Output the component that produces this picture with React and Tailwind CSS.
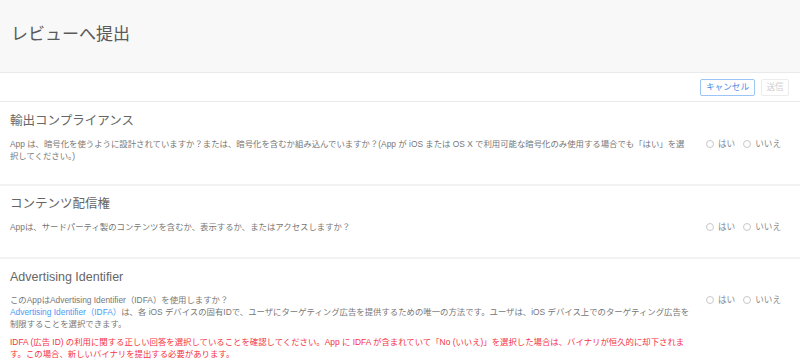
import React from "react";

const font = { fontFamily: '"Liberation Sans", "Noto Sans CJK JP", sans-serif' };

function Radios() {
  return (
    <div className="flex items-center gap-[8px] text-[8.6px] leading-[12px] text-[#888] shrink-0 w-[84px]">
      <label className="flex items-center gap-[4px]">
        <span className="inline-block w-[8px] h-[8px] rounded-full border border-[#c8c8c8] bg-white" />
        はい
      </label>
      <label className="flex items-center gap-[4px]">
        <span className="inline-block w-[8px] h-[8px] rounded-full border border-[#c8c8c8] bg-white" />
        いいえ
      </label>
    </div>
  );
}

function Section({ title, children, className }) {
  return (
    <div className={"px-[10px] border-b-2 border-[#f3f3f3] " + className}>
      <div className="text-[12.5px] leading-[20px] text-[#666] mb-[7px]">{title}</div>
      <div className="flex items-start">
        <div className="w-[682px] text-[8.4px] leading-[12px] text-[#777]">{children}</div>
        <div className="ml-[16px]">
          <Radios />
        </div>
      </div>
    </div>
  );
}

export default function App() {
  return (
    <div className="w-[800px] h-[364px] overflow-hidden bg-white" style={font}>
      <div className="h-[73px] bg-[#f8f8f8] border-b border-[#e9e9e9] flex items-center px-[11px]">
        <h1 className="text-[17px] text-[#5a5a5a] mt-[-2px]">レビューへ提出</h1>
      </div>
      <div className="h-[29px] border-b border-[#ececec] flex items-center justify-end pr-[11px] gap-[6px]">
        <button className="h-[17px] w-[55px] rounded-[2px] border border-[#9cc4f5] text-[#4a8ee8] text-[8.6px] leading-none flex items-center justify-center">
          キャンセル
        </button>
        <button className="h-[17px] w-[28px] rounded-[2px] border border-[#ececec] text-[#d0d0d0] text-[8.6px] leading-none flex items-center justify-center">
          送信
        </button>
      </div>

      <Section title="輸出コンプライアンス" className="pt-[9px] pb-[22px]">
        App は、暗号化を使うように設計されていますか？または、暗号化を含むか組み込んでいますか？(App が iOS または OS X で利用可能な暗号化のみ使用する場合でも「はい」を選択してください。)
      </Section>

      <Section title="コンテンツ配信権" className="pt-[8px] pb-[24px]">
        Appは、サードパーティ製のコンテンツを含むか、表示するか、またはアクセスしますか？
      </Section>

      <Section title="Advertising Identifier" className="pt-[8px] pb-[20px]">
        <div>このAppはAdvertising Identifier（IDFA）を使用しますか？</div>
        <div>
          <span className="text-[#4a9af5]">Advertising Identifier（IDFA）</span>は、各 iOS デバイスの固有IDで、ユーザにターゲティング広告を提供するための唯一の方法です。ユーザは、iOS デバイス上でのターゲティング広告を制限することを選択できます。
        </div>
        <div className="mt-[6px] text-[#f5333f]">
          IDFA (広告 ID) の利用に関する正しい回答を選択していることを確認してください。App に IDFA が含まれていて「No (いいえ)」を選択した場合は、バイナリが恒久的に却下されます。この場合、新しいバイナリを提出する必要があります。
        </div>
      </Section>
    </div>
  );
}
